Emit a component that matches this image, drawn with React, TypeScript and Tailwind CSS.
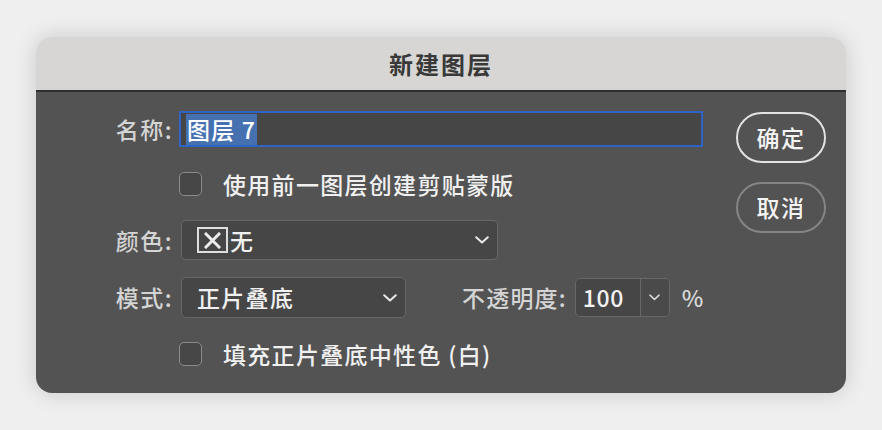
import { useState } from 'react';

const font = { fontFamily: '"Noto Sans CJK SC", "Noto Sans", sans-serif' };

function Chevron({ small = false }: { small?: boolean }) {
  return small ? (
    <svg width="11" height="7" viewBox="0 0 11 7" fill="none">
      <path d="M1 1.2 L5.5 5.5 L10 1.2" stroke="#d8d8d8" strokeWidth="1.6" strokeLinecap="round" strokeLinejoin="round" />
    </svg>
  ) : (
    <svg width="14" height="8" viewBox="0 0 14 8" fill="none">
      <path d="M1.2 1.2 L7 6.6 L12.8 1.2" stroke="#e8e8e8" strokeWidth="2" strokeLinecap="round" strokeLinejoin="round" />
    </svg>
  );
}

function CheckBox({ label }: { label: string }) {
  const [checked, setChecked] = useState(false);
  return (
    <label className="flex items-center cursor-pointer" onClick={() => setChecked(!checked)}>
      <span className="w-[23px] h-[24px] rounded-[5px] border-[1.5px] border-[#8b8b8b] bg-[#474747]" />
      <span className="ml-[21px] text-[23px] font-medium leading-none tracking-[1.3px] text-[#f0f0f0]">{label}</span>
    </label>
  );
}

export default function App() {
  return (
    <div className="w-[882px] h-[430px] bg-[#efefef] pt-[37px] pl-[36px]" style={font}>
      <div className="w-[810px] h-[356px] rounded-[16px] overflow-hidden flex flex-col shadow-[0_0_22px_rgba(0,0,0,0.16)]">
        {/* title bar */}
        <div className="h-[55px] bg-[#d7d6d4] border-b-[2px] border-[#2e2e2e] flex items-center justify-center">
          <span className="text-[24px] font-bold leading-none tracking-[2px] text-[#393939] mt-[1px]">新建图层</span>
        </div>

        {/* body */}
        <div className="flex-1 bg-[#535353] flex">
          <div className="flex-1 flex flex-col">
            {/* 名称 */}
            <div className="mt-[19px] flex items-center h-[36px]">
              <span className="w-[137px] text-right text-[23px] font-medium leading-none tracking-[1.5px] text-[#d4d4d4]">名称:</span>
              <div className="ml-[6px] w-[524px] h-[36px] border-[2px] border-[#2f63c6] bg-[#464646] flex items-center pl-[5px]">
                <span className="bg-[#4571b1] text-white text-[23px] font-medium leading-none tracking-[1.2px] h-[31px] flex items-center px-[1px]">图层 7</span>
              </div>
            </div>

            {/* 剪贴蒙版 */}
            <div className="mt-[25px] h-[24px] pl-[143px] flex items-center">
              <CheckBox label="使用前一图层创建剪贴蒙版" />
            </div>

            {/* 颜色 */}
            <div className="mt-[24px] flex items-center h-[40px]">
              <span className="w-[137px] text-right text-[23px] font-medium leading-none tracking-[1.5px] text-[#d4d4d4]">颜色:</span>
              <div className="ml-[8px] w-[317px] h-[40px] rounded-[5px] border border-[#676767] bg-[#464646] flex items-center pl-[15px] pr-[8px]">
                <span className="w-[31px] h-[26px] border-[2px] border-[#dedede] flex items-center justify-center">
                  <svg width="17" height="17" viewBox="0 0 17 17">
                    <path d="M2 2 L15 15 M15 2 L2 15" stroke="#ececec" strokeWidth="3" strokeLinecap="square" />
                  </svg>
                </span>
                <span className="ml-[2px] text-[23px] font-medium leading-none text-[#f0f0f0]">无</span>
                <span className="ml-auto"><Chevron /></span>
              </div>
            </div>

            {/* 模式 / 不透明度 */}
            <div className="mt-[17px] flex items-center h-[41px]">
              <span className="w-[137px] text-right text-[23px] font-medium leading-none tracking-[1.5px] text-[#d4d4d4]">模式:</span>
              <div className="ml-[8px] w-[225px] h-[41px] rounded-[5px] border border-[#676767] bg-[#464646] flex items-center pl-[15px] pr-[8px]">
                <span className="text-[23px] font-medium leading-none tracking-[1.3px] text-[#f0f0f0]">正片叠底</span>
                <span className="ml-auto"><Chevron /></span>
              </div>
              <span className="ml-[56px] text-[23px] font-medium leading-none tracking-[1.2px] text-[#d4d4d4]">不透明度:</span>
              <div className="ml-[8px] w-[95px] h-[39px] rounded-[5px] border border-[#676767] bg-[#464646] flex">
                <span className="w-[65px] border-r border-[#676767] flex items-center pl-[7px] text-[23px] font-medium leading-none tracking-[0.6px] text-[#f2f2f2]">100</span>
                <span className="flex-1 flex items-center justify-center bg-[#4a4a4a] rounded-r-[5px]"><Chevron small /></span>
              </div>
              <span className="ml-[12px] text-[23px] font-medium leading-none text-[#d8d8d8]">%</span>
            </div>

            {/* 中性色 */}
            <div className="mt-[24px] h-[24px] pl-[143px] flex items-center">
              <CheckBox label="填充正片叠底中性色 (白)" />
            </div>
          </div>

          {/* buttons */}
          <div className="w-[110px] pt-[20px] flex flex-col">
            <button className="w-[90px] h-[51px] rounded-full border-[2px] border-[#e2e2e2] text-[23px] font-medium leading-none tracking-[1.5px] text-[#f4f4f4] flex items-center justify-center">
              确定
            </button>
            <button className="mt-[19px] w-[90px] h-[51px] rounded-full border-[2px] border-[#858585] text-[23px] font-medium leading-none tracking-[1.5px] text-[#f4f4f4] flex items-center justify-center">
              取消
            </button>
          </div>
        </div>
      </div>
    </div>
  );
}
